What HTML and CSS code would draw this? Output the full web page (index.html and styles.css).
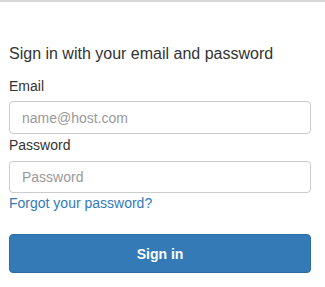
FILE: index.html
```html
<!DOCTYPE html>
<html>
<head>
<meta charset="utf-8">
<link rel="stylesheet" href="styles.css">
</head>
<body>
<div class="topbar"></div>
<form class="signin">
  <h1 class="title">Sign in with your email and password</h1>
  <label class="label" for="email">Email</label>
  <input class="field" id="email" type="text" placeholder="name@host.com">
  <label class="label label-pw" for="pw">Password</label>
  <input class="field field-pw" id="pw" type="password" placeholder="Password">
  <a class="forgot" href="#">Forgot your password?</a>
  <button class="submit" type="button">Sign in</button>
</form>
</body>
</html>
```

FILE: styles.css
```css
html, body {
  margin: 0;
  padding: 0;
  background: #fff;
  font-family: "Liberation Sans", Arial, sans-serif;
  color: #333;
}
.topbar {
  height: 2px;
  background: #d6d6d6;
}
.signin {
  display: flex;
  flex-direction: column;
  align-items: stretch;
  padding: 42px 14px 0 9px;
  margin: 0;
}
.title {
  margin: 0 0 12px 0;
  font-size: 16px;
  line-height: 20px;
  font-weight: normal;
  color: #333;
}
.label {
  font-size: 14px;
  line-height: 20px;
  color: #333;
  margin: 0 0 5px 0;
}
.label-pw {
  margin-top: 1px;
  margin-bottom: 6px;
}
.field {
  box-sizing: border-box;
  height: 33px;
  margin: 0;
  padding: 0 12px;
  border: 1px solid #cccccc;
  border-radius: 4px;
  font-family: "Liberation Sans", Arial, sans-serif;
  font-size: 14px;
  color: #555;
  background: #fff;
  outline: none;
}
.field::placeholder {
  color: #999;
}
.field-pw {
  height: 32px;
}
.forgot {
  font-size: 14px;
  line-height: 20px;
  color: #337ab7;
  text-decoration: none;
  align-self: flex-start;
}
.submit {
  margin-top: 21px;
  height: 39px;
  border: 1px solid #2e6da4;
  border-radius: 4px;
  background: #337ab7;
  color: #fff;
  font-family: "Liberation Sans", Arial, sans-serif;
  font-size: 14px;
  font-weight: bold;
  padding: 0;
}
```
